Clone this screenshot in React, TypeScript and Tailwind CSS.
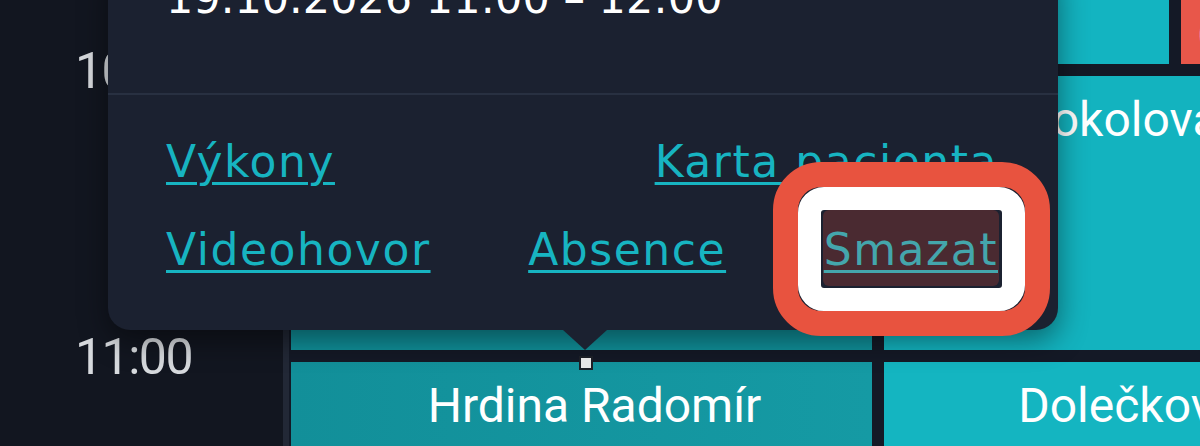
const linkCls =
  "text-[#17b4c1] underline decoration-[3px] underline-offset-[5px] whitespace-nowrap";

const Slot = ({ children }: { children: React.ReactNode }) => (
  <div className="h-[286px] py-[6px]">{children}</div>
);

const TimeColumn = () => (
  <div className="w-[283px] shrink-0">
    {["9:00", "10:00", "11:00", "12:00"].map((t) => (
      <div key={t} className="h-[286px]">
        <div className="-translate-y-[24px] pr-[91px] text-right text-[50px] leading-none tracking-[-1.5px] text-[#d7dade]">
          {t}
        </div>
      </div>
    ))}
  </div>
);

const Popover = () => (
  <div className="absolute left-[108px] top-[-40px] h-[370px] w-[950px] rounded-[22px] bg-[#1b2130] shadow-[0_10px_30px_rgba(0,0,0,0.45)] font-['DejaVu_Sans',sans-serif]">
    <div className="h-[135px] border-b-2 border-[#283041] pl-[58px] pt-[17px] text-[43px] leading-none text-white">
      19.10.2026 11:00 – 12:00
    </div>
    <div className="flex flex-col gap-[44px] pl-[58px] pr-[60px] pt-[45px] text-[44px] leading-none tracking-[0.035em]">
      <div className="flex justify-between">
        <a className={linkCls}>Výkony</a>
        <a className={linkCls}>Karta pacienta</a>
      </div>
      <div className="flex justify-between">
        <a className={linkCls}>Videohovor</a>
        <a className={linkCls}>Absence</a>
        <div className="relative">
          <a className="-mx-[1px] -mb-[14px] -mt-[18px] block rounded-[6px] bg-[#4a2a31] px-[1px] pb-[14px] pt-[18px] text-[#44a6ac] underline decoration-[3px] underline-offset-[5px]">
            Smazat
          </a>
          {/* annotation ring */}
          <div className="pointer-events-none absolute -bottom-[64px] -left-[51px] -right-[52px] -top-[66px] rounded-[48px] border-[25px] border-[#e8533f]">
            <div className="h-full w-full rounded-[26px] border-[23px] border-white" />
          </div>
        </div>
      </div>
    </div>
    {/* arrow */}
    <div className="absolute left-[455px] top-full h-0 w-0 border-x-[22px] border-t-[20px] border-x-transparent border-t-[#1b2130]" />
  </div>
);

export default function App() {
  return (
    <div className="relative h-[446px] w-[1200px] overflow-hidden bg-[#121620] font-['Roboto',sans-serif]">
      <div className="-mt-[216px] flex">
        <TimeColumn />
        <div className="grid shrink-0 grid-cols-[581px_581px] gap-x-[12px] border-l-[6px] border-[#222836] bg-[#141926] pl-[2px]">
          {/* column 1 */}
          <div className="flex flex-col">
            <Slot>
              <div className="h-full bg-[#11919b]" />
            </Slot>
            <Slot>
              <div className="h-full bg-[#10919b]" />
            </Slot>
            <Slot>
              <div className="h-full bg-gradient-to-r from-[#128f99] to-[#159aa4] pl-[26px] pt-[20px] text-center text-[48px] leading-none text-white">
                Hrdina Radomír
              </div>
            </Slot>
          </div>
          {/* column 2 */}
          <div className="flex flex-col">
            <Slot>
              <div className="grid h-full grid-cols-2 gap-x-[12px]">
                <div className="min-w-0 bg-[#13b4c1]" />
                <div className="flex min-w-0 items-end overflow-hidden whitespace-nowrap bg-[#e8574a] pb-[6px] pl-[17px] text-[44px] leading-none text-white">
                  Černá Eva
                </div>
              </div>
            </Slot>
            <Slot>
              <div className="h-full whitespace-nowrap bg-[#13b3bf] pl-[26px] pt-[20px] text-center text-[48px] leading-none text-white">
                Sokolová Marie
              </div>
            </Slot>
            <Slot>
              <div className="h-full whitespace-nowrap bg-[#14b5c1] pl-[26px] pt-[20px] text-center text-[48px] leading-none text-white">
                Dolečková Jana
              </div>
            </Slot>
          </div>
        </div>
      </div>
      <Popover />
      <div className="absolute left-[579px] top-[356px] h-[14px] w-[14px] border-2 border-[#1c1f26] bg-[#e6e6e6]" />
    </div>
  );
}
